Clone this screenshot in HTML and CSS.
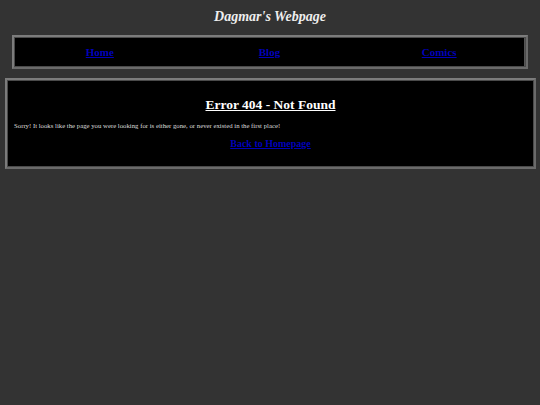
FILE: index.html
```html
<!DOCTYPE html>
<html>
<head>
<meta charset="utf-8">
<link rel="stylesheet" href="styles.css">
</head>
<body>
<h1 class="title">Dagmar's Webpage</h1>
<div class="nav-frame">
  <div class="nav">
    <a class="nav-link" href="#">Home</a>
    <a class="nav-link" href="#">Blog</a>
    <a class="nav-link" href="#">Comics</a>
  </div>
</div>
<div class="main-frame">
  <div class="main">
    <h2 class="heading">Error 404 - Not Found</h2>
    <p class="msg">Sorry! It looks like the page you were looking for is either gone, or never existed in the first place!</p>
    <p class="back"><a class="back-link" href="#">Back to Homepage</a></p>
  </div>
</div>
</body>
</html>
```
FILE: styles.css
```css
html, body {
  margin: 0;
  padding: 0;
  background: #333333;
  font-family: "Liberation Serif", "Times New Roman", serif;
}
body {
  padding: 8px 4px;
}
.title {
  margin: 0;
  text-align: center;
  color: #eeeeee;
  font-size: 14px;
  font-style: italic;
  font-weight: bold;
  line-height: 18px;
}
.nav-frame {
  margin: 9px 8px 0 8px;
  border: 2px solid #7c7c7c;
  border-bottom-color: #6a6a6a;
  border-right-color: #6a6a6a;
  padding: 1px;
  background: #4a4a4a;
}
.nav {
  background: #000;
  display: grid;
  grid-template-columns: 1fr 1fr 1fr;
  height: 28px;
  align-items: center;
  border-right: 1px solid #555;
}
.nav-link {
  text-align: center;
  color: #0000bb;
  font-weight: bold;
  font-size: 11px;
  line-height: 14px;
}
.main-frame {
  margin: 9px 0 0 1px;
  border: 2px solid #7c7c7c;
  border-bottom-color: #6a6a6a;
  border-right-color: #6a6a6a;
  padding: 1px;
  background: #4a4a4a;
}
.main {
  background: #000;
  padding: 15px 6px 16px 6px;
}
.heading {
  margin: 0;
  text-align: center;
  color: #ffffff;
  font-size: 13.5px;
  text-decoration: underline;
  line-height: 18px;
}
.msg {
  margin: 7px 0 0 0;
  color: #dddddd;
  font-size: 6.75px;
  line-height: 9px;
}
.back {
  margin: 8px 0 0 0;
  text-align: center;
  font-size: 10px;
  line-height: 12px;
}
.back-link {
  color: #0000bb;
  font-weight: bold;
}
```
